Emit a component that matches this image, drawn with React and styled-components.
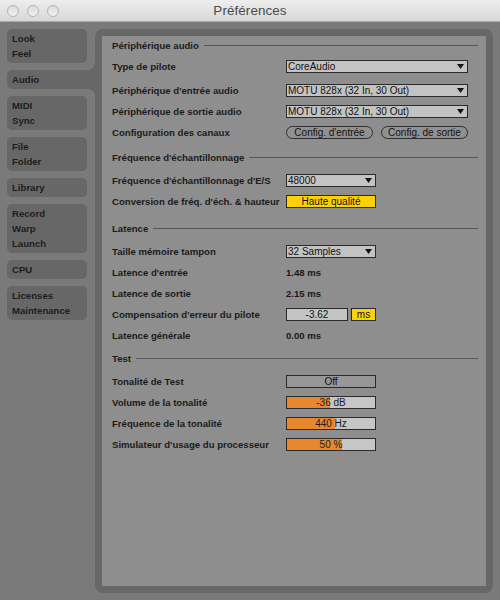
import React from 'react';
import styled, { createGlobalStyle } from 'styled-components';

const Global = createGlobalStyle`
  html, body { margin: 0; padding: 0; background: #7a7a7a; }
  body { font-family: "Liberation Sans", Arial, sans-serif; }
  * { box-sizing: border-box; }
`;

const Window = styled.div`
  width: 500px;
  height: 600px;
  display: flex;
  flex-direction: column;
  background: #7a7a7a;
  overflow: hidden;
`;

const TitleBar = styled.div`
  height: 22px;
  flex: none;
  display: grid;
  grid-template-columns: 1fr auto 1fr;
  align-items: center;
  background: linear-gradient(#eeeeee, #d7d7d7);
  border-bottom: 1px solid #a9a9a9;
`;

const Lights = styled.div`
  display: flex;
  gap: 8px;
  padding-left: 7px;
`;

const Light = styled.span`
  width: 12px;
  height: 12px;
  border-radius: 50%;
  border: 1px solid #b2b2b2;
  background: linear-gradient(#dcdcdc, #f0f0f0);
`;

const Title = styled.div`
  font-size: 13.4px;
  color: #4b4b4b;
  letter-spacing: 0.1px;
`;

const Body = styled.div`
  flex: 1;
  display: flex;
  gap: 8px;
  padding: 7px;
  min-height: 0;
`;

const Sidebar = styled.div`
  width: 80px;
  flex: none;
  display: flex;
  flex-direction: column;
  gap: 7px;
`;

const TAB = '#676767';

const Tab = styled.div`
  position: relative;
  background: ${TAB};
  border-radius: ${p => (p.$active ? '5px 0 0 5px' : '5px')};
  margin-right: ${p => (p.$active ? '-8px' : '0')};
  padding: 2px 5px;
  line-height: 15px;
  font-size: 9.6px;
  font-weight: bold;
  color: #1d1d1d;

  ${p =>
    p.$active &&
    `
    &::before, &::after {
      content: '';
      position: absolute;
      right: 0;
      width: 7px;
      height: 7px;
    }
    &::before {
      top: -7px;
      background: radial-gradient(circle at 0 0, transparent 6.5px, ${TAB} 7px);
    }
    &::after {
      bottom: -7px;
      background: radial-gradient(circle at 0 100%, transparent 6.5px, ${TAB} 7px);
    }
  `}
`;

const TabLine = styled.div``;

const Panel = styled.div`
  flex: 1;
  border: 7px solid ${TAB};
  border-radius: 8px;
  background: #8e8e8e;
  padding: 0 8px 0 10px;
  color: #1b1b1b;
`;

const Section = styled.div`
  margin-top: ${p => p.$top}px;
`;

const Header = styled.div`
  height: 18px;
  display: flex;
  align-items: center;
  gap: 5px;
  font-size: 9.6px;
  font-weight: bold;
  margin-bottom: ${p => p.$after}px;

  &::after {
    content: '';
    flex: 1;
    height: 1px;
    background: #575757;
  }
`;

const Row = styled.div`
  height: 21px;
  display: grid;
  grid-template-columns: 174px 1fr;
  align-items: center;
  margin-top: ${p => p.$top || 0}px;
`;

const Label = styled.div`
  font-size: 9.6px;
  font-weight: bold;
  white-space: nowrap;
`;

const Value = styled.div`
  font-size: 9.6px;
  font-weight: bold;
`;

const Controls = styled.div`
  display: flex;
  align-items: center;
  gap: ${p => p.$gap || 0}px;
`;

const SelectBox = styled.div`
  width: ${p => p.$w}px;
  height: 13px;
  border: 1px solid #2a2a2a;
  background: #c3c3c3;
  display: flex;
  align-items: center;
  justify-content: space-between;
  padding: 0 3px 0 1px;
  font-size: 10px;
  color: #111;
  line-height: 11px;
  white-space: nowrap;
`;

const Arrow = () => (
  <svg width="7" height="5" viewBox="0 0 7 5">
    <polygon points="0,0 7,0 3.5,5" fill="#111" />
  </svg>
);

const Select = ({ w, children }) => (
  <SelectBox $w={w}>
    <span>{children}</span>
    <Arrow />
  </SelectBox>
);

const Pill = styled.div`
  width: 87px;
  height: 13px;
  border: 1px solid #2e2e2e;
  border-radius: 7px;
  display: flex;
  align-items: center;
  justify-content: center;
  font-size: 10px;
  line-height: 11px;
  color: #111;
  background: #919191;
`;

const Box = styled.div`
  width: ${p => p.$w}px;
  height: 13px;
  border: 1px solid #2a2a2a;
  background: ${p => p.$bg};
  display: flex;
  align-items: center;
  justify-content: center;
  font-size: 10px;
  line-height: 11px;
  color: #111;
`;

const Slider = styled.div`
  width: 90px;
  height: 13px;
  border: 1px solid #2a2a2a;
  background: #c6c6c6;
  position: relative;
  display: flex;
  align-items: center;
  justify-content: center;
  font-size: 10px;
  line-height: 11px;
  color: #1a1a1a;
  overflow: hidden;
`;

const Fill = styled.div`
  position: absolute;
  left: 0;
  top: 0;
  bottom: 0;
  background: #e5882f;
`;

const SliderText = styled.span`
  position: relative;
`;

const SliderCtl = ({ pct, children }) => (
  <Slider>
    <Fill style={{ width: `${pct}%` }} />
    <SliderText>{children}</SliderText>
  </Slider>
);

const tabs = [
  ['Look', 'Feel'],
  ['Audio'],
  ['MIDI', 'Sync'],
  ['File', 'Folder'],
  ['Library'],
  ['Record', 'Warp', 'Launch'],
  ['CPU'],
  ['Licenses', 'Maintenance'],
];

export default function App() {
  return (
    <>
      <Global />
      <Window>
        <TitleBar>
          <Lights>
            <Light />
            <Light />
            <Light />
          </Lights>
          <Title>Préférences</Title>
          <div />
        </TitleBar>
        <Body>
          <Sidebar>
            {tabs.map((t, i) => (
              <Tab key={i} $active={t[0] === 'Audio'}>
                {t.map(x => (
                  <TabLine key={x}>{x}</TabLine>
                ))}
              </Tab>
            ))}
          </Sidebar>
          <Panel>
            <Section $top={0}>
              <Header $after={2}>Périphérique audio</Header>
              <Row>
                <Label>Type de pilote</Label>
                <Select w={182}>CoreAudio</Select>
              </Row>
              <Row $top={3}>
                <Label>Périphérique d'entrée audio</Label>
                <Select w={182}>MOTU 828x (32 In, 30 Out)</Select>
              </Row>
              <Row>
                <Label>Périphérique de sortie audio</Label>
                <Select w={182}>MOTU 828x (32 In, 30 Out)</Select>
              </Row>
              <Row>
                <Label>Configuration des canaux</Label>
                <Controls $gap={8}>
                  <Pill>Config. d'entrée</Pill>
                  <Pill>Config. de sortie</Pill>
                </Controls>
              </Row>
            </Section>

            <Section $top={5}>
              <Header $after={4}>Fréquence d'échantillonnage</Header>
              <Row>
                <Label>Fréquence d'échantillonnage d'E/S</Label>
                <Select w={90}>48000</Select>
              </Row>
              <Row>
                <Label>Conversion de fréq. d'éch. &amp; hauteur</Label>
                <Box $w={90} $bg="#ffd100">Haute qualité</Box>
              </Row>
            </Section>

            <Section $top={7}>
              <Header $after={4}>Latence</Header>
              <Row>
                <Label>Taille mémoire tampon</Label>
                <Select w={90}>32 Samples</Select>
              </Row>
              <Row>
                <Label>Latence d'entrée</Label>
                <Value>1.48 ms</Value>
              </Row>
              <Row>
                <Label>Latence de sortie</Label>
                <Value>2.15 ms</Value>
              </Row>
              <Row>
                <Label>Compensation d'erreur du pilote</Label>
                <Controls $gap={3}>
                  <Box $w={62} $bg="#c4c4c4">-3.62</Box>
                  <Box $w={25} $bg="#ffd100">ms</Box>
                </Controls>
              </Row>
              <Row>
                <Label>Latence générale</Label>
                <Value>0.00 ms</Value>
              </Row>
            </Section>

            <Section $top={3}>
              <Header $after={4}>Test</Header>
              <Row>
                <Label>Tonalité de Test</Label>
                <Box $w={90} $bg="#979797">Off</Box>
              </Row>
              <Row>
                <Label>Volume de la tonalité</Label>
                <SliderCtl pct={49}>-36 dB</SliderCtl>
              </Row>
              <Row>
                <Label>Fréquence de la tonalité</Label>
                <SliderCtl pct={55}>440 Hz</SliderCtl>
              </Row>
              <Row>
                <Label>Simulateur d'usage du processeur</Label>
                <SliderCtl pct={62}>50 %</SliderCtl>
              </Row>
            </Section>
          </Panel>
        </Body>
      </Window>
    </>
  );
}
